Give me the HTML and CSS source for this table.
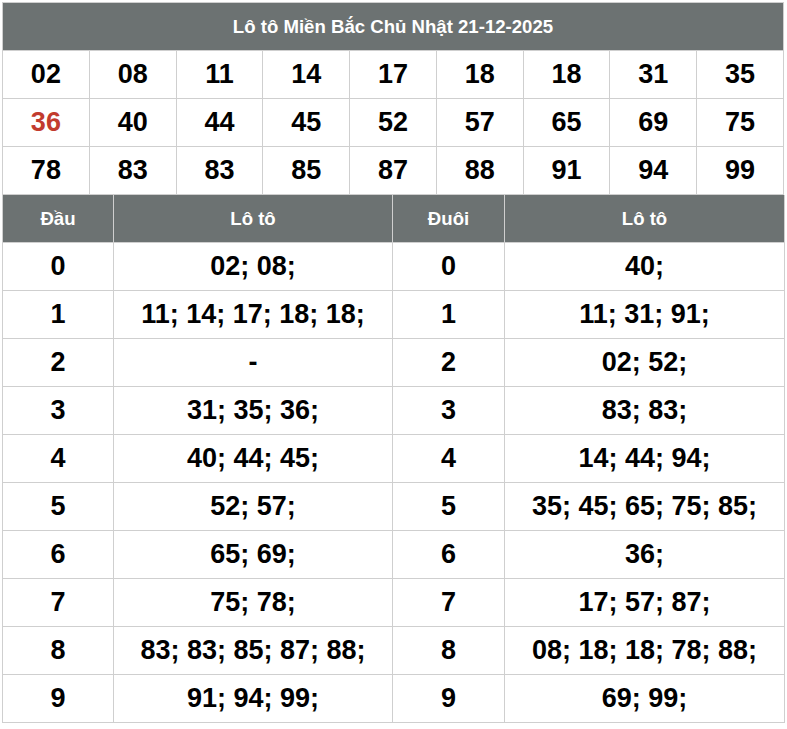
FILE: index.html
```html
<!DOCTYPE html>
<html lang="vi">
<head>
<meta charset="utf-8">
<title>Lô tô Miền Bắc</title>
<link rel="stylesheet" href="styles.css">
</head>
<body>
<div class="wrap">
<table class="grid">
  <tr><th colspan="9" class="title">Lô tô Miền Bắc Chủ Nhật 21-12-2025</th></tr>
  <tr><td>02</td><td>08</td><td>11</td><td>14</td><td>17</td><td>18</td><td>18</td><td>31</td><td>35</td></tr>
  <tr><td class="red">36</td><td>40</td><td>44</td><td>45</td><td>52</td><td>57</td><td>65</td><td>69</td><td>75</td></tr>
  <tr><td>78</td><td>83</td><td>83</td><td>85</td><td>87</td><td>88</td><td>91</td><td>94</td><td>99</td></tr>
</table>
<table class="heads">
  <colgroup><col class="c1"><col class="c2"><col class="c3"><col class="c4"></colgroup>
  <tr><th>Đầu</th><th>Lô tô</th><th>Đuôi</th><th>Lô tô</th></tr>
  <tr><td>0</td><td>02; 08;</td><td>0</td><td>40;</td></tr>
  <tr><td>1</td><td>11; 14; 17; 18; 18;</td><td>1</td><td>11; 31; 91;</td></tr>
  <tr><td>2</td><td>-</td><td>2</td><td>02; 52;</td></tr>
  <tr><td>3</td><td>31; 35; 36;</td><td>3</td><td>83; 83;</td></tr>
  <tr><td>4</td><td>40; 44; 45;</td><td>4</td><td>14; 44; 94;</td></tr>
  <tr><td>5</td><td>52; 57;</td><td>5</td><td>35; 45; 65; 75; 85;</td></tr>
  <tr><td>6</td><td>65; 69;</td><td>6</td><td>36;</td></tr>
  <tr><td>7</td><td>75; 78;</td><td>7</td><td>17; 57; 87;</td></tr>
  <tr><td>8</td><td>83; 83; 85; 87; 88;</td><td>8</td><td>08; 18; 18; 78; 88;</td></tr>
  <tr><td>9</td><td>91; 94; 99;</td><td>9</td><td>69; 99;</td></tr>
</table>
</div>
</body>
</html>
```
FILE: styles.css
```css
html, body {
  margin: 0;
  padding: 0;
  background: #fff;
}
body {
  padding: 2px 0 0 2px;
  font-family: "Liberation Sans", Arial, sans-serif;
}
.wrap {
  width: 782px;
}
table {
  width: 782px;
  border-collapse: collapse;
  table-layout: fixed;
}
th, td {
  border: 1px solid #cfcfcf;
  text-align: center;
  vertical-align: middle;
  padding: 0;
  font-weight: bold;
}
th {
  background: #6c7272;
  color: #fff;
  font-size: 18.6px;
  height: 47px;
}
td {
  color: #000;
  font-size: 27px;
  height: 47px;
}
.red {
  color: #c23b2e;
}
.grid + .heads tr:first-child th {
  border-top: 0;
}
.c1 { width: 111px; }
.c2 { width: 279px; }
.c3 { width: 112px; }
.c4 { width: 280px; }
```
